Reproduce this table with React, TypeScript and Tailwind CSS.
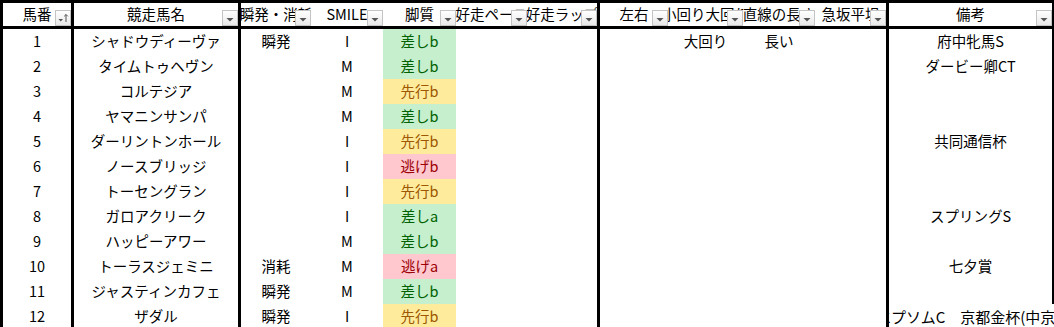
type Col = { key: string; label: string; w: string; edge?: boolean };

// widths include the thick left border (box-sizing: border-box)
const COLS: Col[] = [
  { key: "no", label: "馬番", w: "w-[71px]", edge: true },
  { key: "name", label: "競走馬名", w: "w-[167px]", edge: true },
  { key: "burst", label: "瞬発・消耗", w: "w-[73px]", edge: true },
  { key: "smile", label: "SMILE", w: "w-[72px]" },
  { key: "style", label: "脚質", w: "w-[73px]" },
  { key: "pace", label: "好走ペース", w: "w-[71px]" },
  { key: "lap", label: "好走ラップ", w: "w-[70px]" },
  { key: "lr", label: "左右", w: "w-[71px]", edge: true },
  { key: "turn", label: "小回り大回り", w: "w-[75px]" },
  { key: "straight", label: "直線の長さ", w: "w-[72px]" },
  { key: "slope", label: "急坂平坦", w: "w-[71px]" },
  { key: "note", label: "備考", w: "w-[168px]", edge: true },
];

type Row = Record<string, string>;

const ROWS: Row[] = [
  { no: "1", name: "シャドウディーヴァ", burst: "瞬発", smile: "I", style: "差しb", turn: "大回り", straight: "長い", note: "府中牝馬S" },
  { no: "2", name: "タイムトゥヘヴン", smile: "M", style: "差しb", note: "ダービー卿CT" },
  { no: "3", name: "コルテジア", smile: "M", style: "先行b" },
  { no: "4", name: "ヤマニンサンパ", smile: "M", style: "差しb" },
  { no: "5", name: "ダーリントンホール", smile: "I", style: "先行b", note: "共同通信杯" },
  { no: "6", name: "ノースブリッジ", smile: "I", style: "逃げb" },
  { no: "7", name: "トーセングラン", smile: "I", style: "先行b" },
  { no: "8", name: "ガロアクリーク", smile: "I", style: "差しa", note: "スプリングS" },
  { no: "9", name: "ハッピーアワー", smile: "M", style: "差しb" },
  { no: "10", name: "トーラスジェミニ", burst: "消耗", smile: "M", style: "逃げa", note: "七夕賞" },
  { no: "11", name: "ジャスティンカフェ", burst: "瞬発", smile: "M", style: "差しb" },
  { no: "12", name: "ザダル", burst: "瞬発", smile: "I", style: "先行b", note: "エプソムC　京都金杯(中京)" },
];

function styleColor(v?: string) {
  if (!v) return "";
  if (v.startsWith("差し")) return "bg-[#c6efce] text-[#006100]";
  if (v.startsWith("先行")) return "bg-[#ffeb9c] text-[#9c5700]";
  if (v.startsWith("逃げ")) return "bg-[#ffc7ce] text-[#9c0006]";
  return "";
}

function FilterButton({ sorted }: { sorted?: boolean }) {
  return (
    <div className="absolute right-0 bottom-0 w-4 h-4 border border-[#c4c4c4] bg-linear-to-b from-white to-[#e9e9e9]">
      <svg width="14" height="14" viewBox="0 0 14 14" className="block">
        {sorted ? (
          <>
            <polygon points="2.5,8 7,8 4.75,10.5" fill="#555" />
            <line x1="10" y1="3.5" x2="10" y2="11" stroke="#555" strokeWidth="1" />
            <polyline points="8.2,5.3 10,3.5 11.8,5.3" fill="none" stroke="#555" strokeWidth="1" />
          </>
        ) : (
          <polygon points="3.5,7 10.5,7 7,10.5" fill="#555" />
        )}
      </svg>
    </div>
  );
}

export default function App() {
  return (
    <div className="w-[1054px] h-[327px] overflow-hidden bg-white text-black font-['Noto_Sans_CJK_JP','Liberation_Sans',sans-serif] text-[14.5px] leading-none">
      {/* header */}
      <div className="flex border-t-[3px] border-b-[3px] border-black">
        {COLS.map((c, i) => (
          <div
            key={c.key}
            className={`relative shrink-0 h-[23px] ${c.w} ${c.edge ? "border-l-[3px] border-black" : ""} ${
              i === COLS.length - 1 ? "border-r-2" : ""
            }`}
          >
            <div className="h-full flex items-center justify-center overflow-hidden whitespace-nowrap">
              <span className="shrink-0">{c.label}</span>
            </div>
            <FilterButton sorted={i === 0} />
          </div>
        ))}
      </div>

      {/* body */}
      {ROWS.map((r, ri) => (
        <div key={ri} className="flex">
          {COLS.map((c, i) => {
            const last = i === COLS.length - 1;
            const overflowNote = last && ri === ROWS.length - 1;
            return (
              <div
                key={c.key}
                className={`shrink-0 h-[25px] ${c.w} ${c.edge ? "border-l-[3px] border-black" : ""} ${
                  last && !overflowNote ? "border-r-2" : ""
                } ${c.key === "style" ? styleColor(r.style) : ""} flex items-center overflow-hidden whitespace-nowrap ${
                  overflowNote ? "justify-start" : "justify-center"
                }`}
              >
                {overflowNote ? (
                  // long note spills past the sheet edge, clipped like Excel
                  <span className="shrink-0 -ml-[13px] text-[15px]">{r[c.key]}</span>
                ) : (
                  <span className="shrink-0">{r[c.key] ?? ""}</span>
                )}
              </div>
            );
          })}
        </div>
      ))}
    </div>
  );
}
